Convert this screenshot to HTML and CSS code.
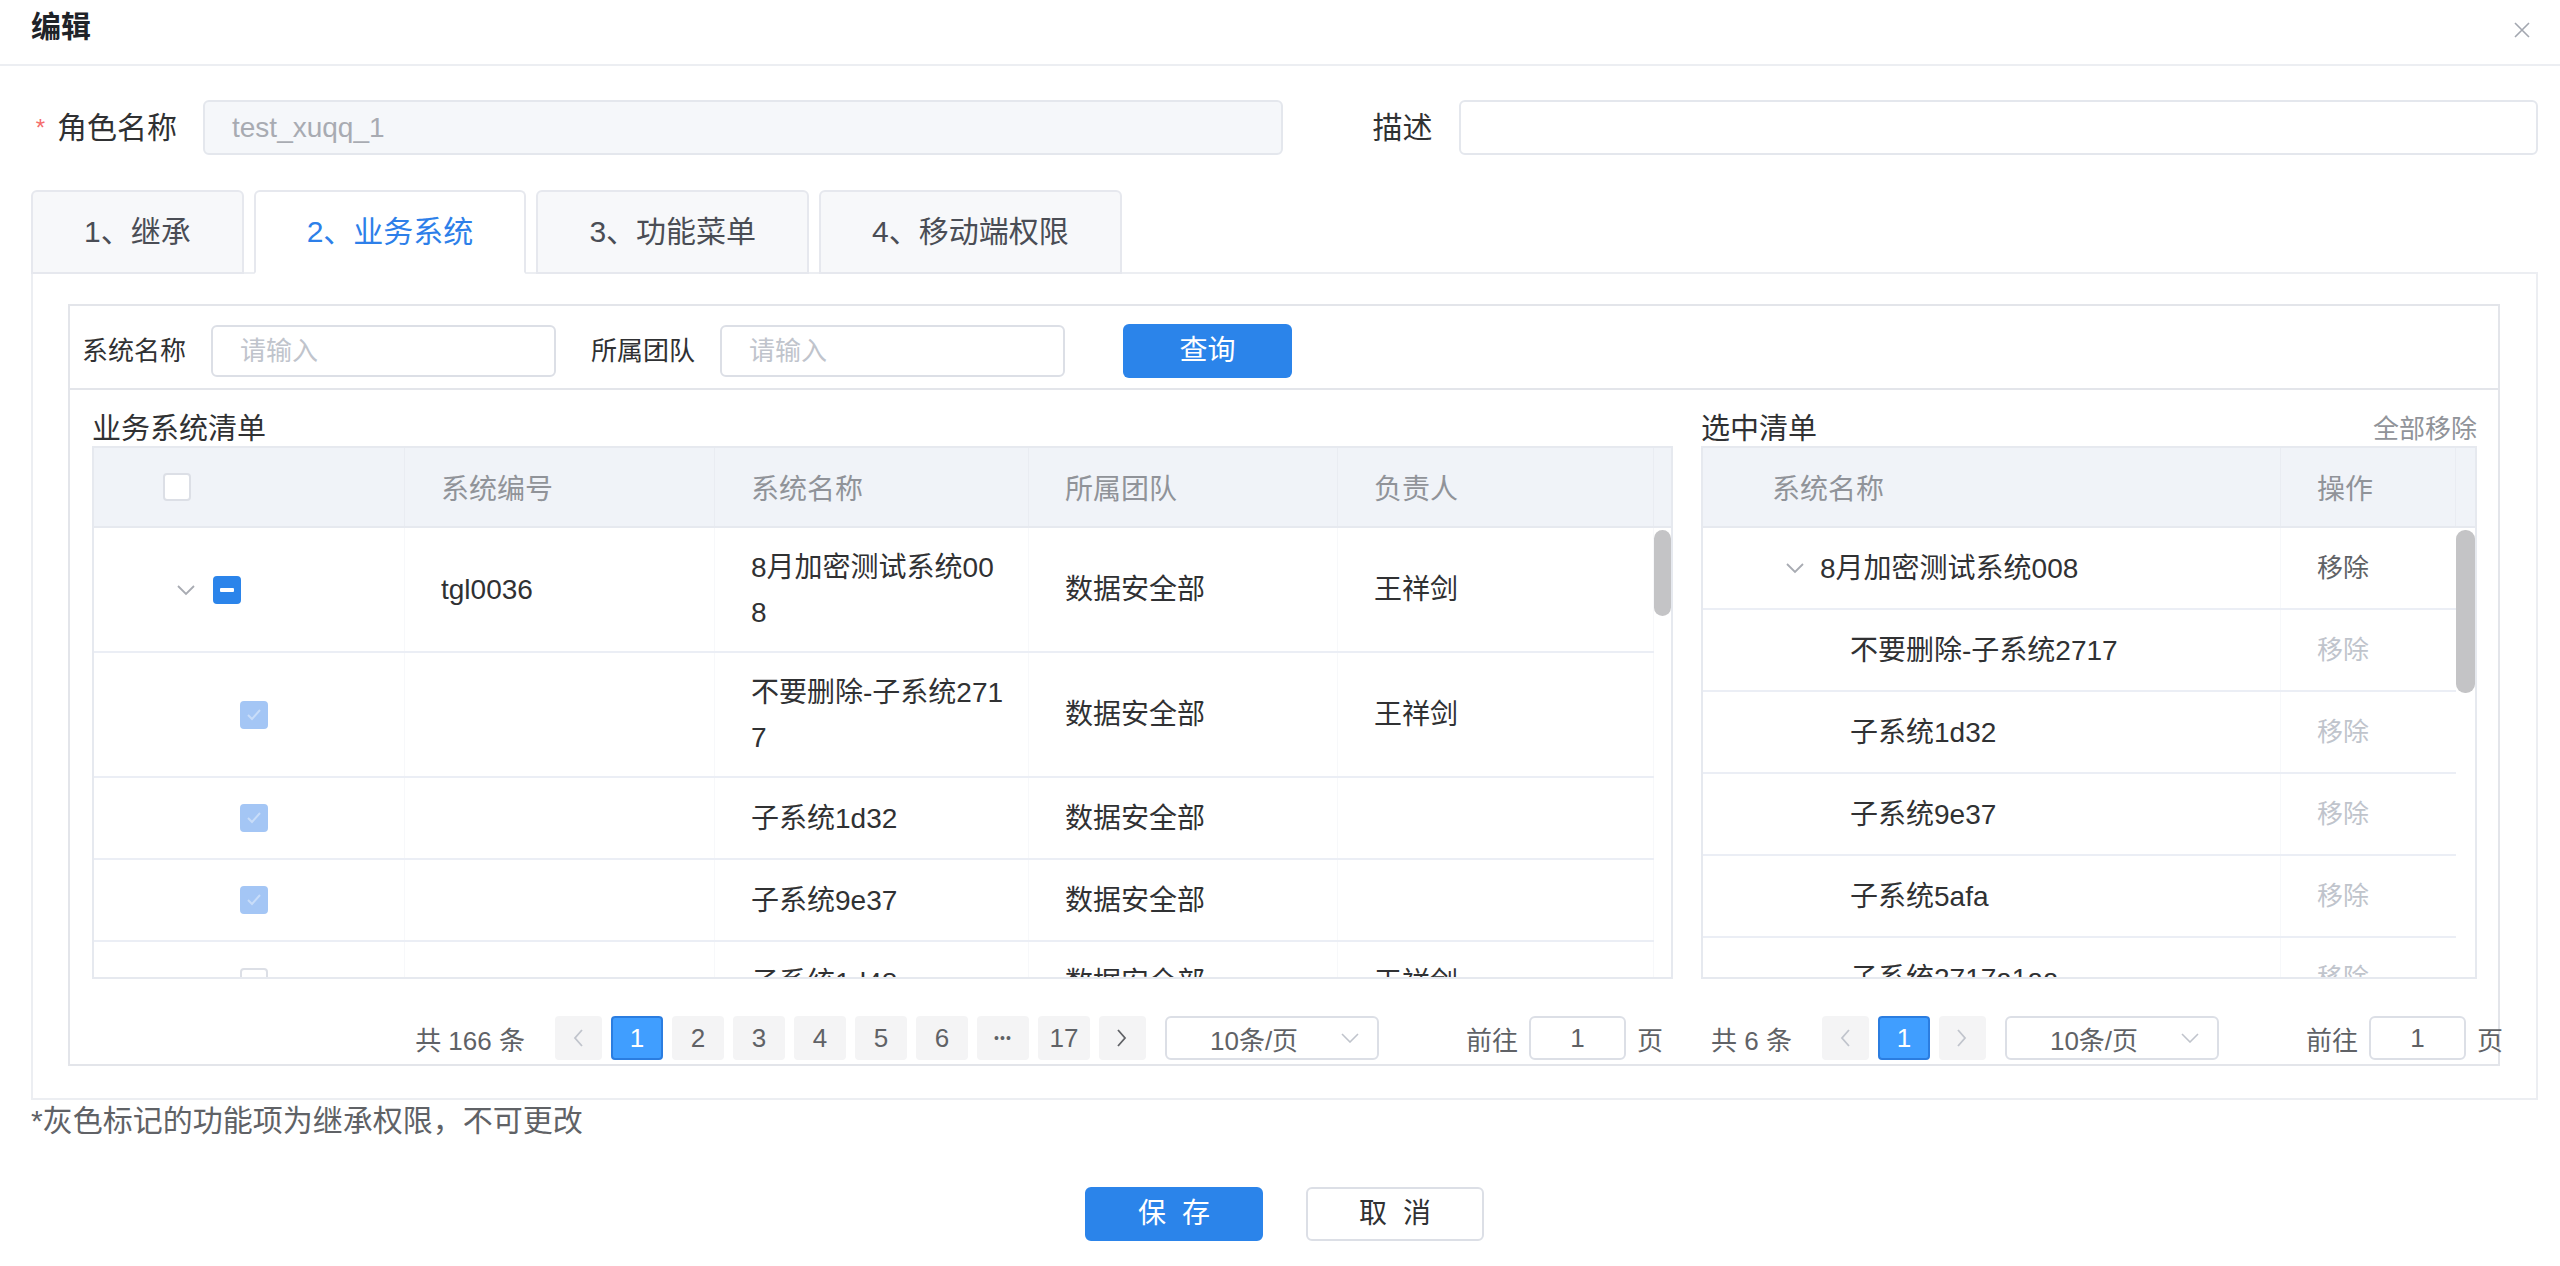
FILE: index.html
```
<!DOCTYPE html>
<html lang="zh-CN">
<head>
<meta charset="utf-8">
<title>编辑</title>
<link rel="stylesheet" href="styles.css">
</head>
<body>
<div class="dialog">
  <div class="dlg-header">
    <span class="dlg-title">编辑</span>
    <svg class="dlg-close" width="16" height="16" viewBox="0 0 16 16"><path d="M1 1L15 15M15 1L1 15" stroke="#a3a7b0" stroke-width="1.6" fill="none"/></svg>
  </div>
  <div class="dlg-body">
    <div class="form-row">
      <div class="field">
        <label class="field-label"><span class="req">*</span>角色名称</label>
        <div class="input input-disabled">test_xuqq_1</div>
      </div>
      <div class="field">
        <label class="field-label">描述</label>
        <div class="input"></div>
      </div>
    </div>

    <div class="tabs">
      <div class="tab-nav">
        <div class="tab">1、继承</div>
        <div class="tab tab-active">2、业务系统</div>
        <div class="tab">3、功能菜单</div>
        <div class="tab">4、移动端权限</div>
      </div>
      <div class="tab-pane">
        <div class="panel">
          <div class="filter">
            <span class="filter-label">系统名称</span>
            <div class="filter-input">请输入</div>
            <span class="filter-label">所属团队</span>
            <div class="filter-input filter-input-last">请输入</div>
            <div class="btn-query">查询</div>
          </div>
          <div class="lists">
            <div class="list list-main">
              <div class="list-head"><span class="list-title">业务系统清单</span></div>
              <div class="tbl">
                <div class="thead thead-main">
                  <div class="th th-check"><span class="cb"></span></div>
                  <div class="th">系统编号</div>
                  <div class="th">系统名称</div>
                  <div class="th">所属团队</div>
                  <div class="th">负责人</div>
                  <div class="th th-gutter"></div>
                </div>
                <div class="tbody">
                  <div class="rows rows-main">
                    <div class="tr tr-main tr-tall">
                      <div class="td td-parent"><svg class="caret" width="20" height="12" viewBox="0 0 20 12"><path d="M2 2l8 8 8-8" fill="none" stroke="#a8abb2" stroke-width="1.8"/></svg><span class="cb cb-ind"></span></div>
                      <div class="td">tgl0036</div>
                      <div class="td">8月加密测试系统00<br>8</div>
                      <div class="td">数据安全部</div>
                      <div class="td">王祥剑</div>
                    </div>
                    <div class="tr tr-main tr-tall">
                      <div class="td td-child"><span class="cb cb-dis"><svg width="24" height="24" viewBox="0 0 24 24"><path d="M6 12l4 4 8-9" fill="none" stroke="#ffffff" stroke-opacity="0.4" stroke-width="2"/></svg></span></div>
                      <div class="td"></div>
                      <div class="td">不要删除-子系统271<br>7</div>
                      <div class="td">数据安全部</div>
                      <div class="td">王祥剑</div>
                    </div>
                    <div class="tr tr-main">
                      <div class="td td-child"><span class="cb cb-dis"><svg width="24" height="24" viewBox="0 0 24 24"><path d="M6 12l4 4 8-9" fill="none" stroke="#ffffff" stroke-opacity="0.4" stroke-width="2"/></svg></span></div>
                      <div class="td"></div>
                      <div class="td">子系统1d32</div>
                      <div class="td">数据安全部</div>
                      <div class="td"></div>
                    </div>
                    <div class="tr tr-main">
                      <div class="td td-child"><span class="cb cb-dis"><svg width="24" height="24" viewBox="0 0 24 24"><path d="M6 12l4 4 8-9" fill="none" stroke="#ffffff" stroke-opacity="0.4" stroke-width="2"/></svg></span></div>
                      <div class="td"></div>
                      <div class="td">子系统9e37</div>
                      <div class="td">数据安全部</div>
                      <div class="td"></div>
                    </div>
                    <div class="tr tr-main">
                      <div class="td td-child"><span class="cb"></span></div>
                      <div class="td"></div>
                      <div class="td">子系统1d48</div>
                      <div class="td">数据安全部</div>
                      <div class="td">王祥剑</div>
                    </div>
                  </div>
                  <div class="gutter"><div class="thumb thumb-main"></div></div>
                </div>
              </div>
              <div class="pager pager-end">
                <span class="pg-total">共 166 条</span>
                <span class="pg-btn pg-arrow pg-disabled"><svg width="12" height="20" viewBox="0 0 12 20"><path d="M10 2L3 10l7 8" fill="none" stroke="currentColor" stroke-width="1.8"/></svg></span>
                <span class="pg-btn pg-active">1</span>
                <span class="pg-btn">2</span>
                <span class="pg-btn">3</span>
                <span class="pg-btn">4</span>
                <span class="pg-btn">5</span>
                <span class="pg-btn">6</span>
                <span class="pg-btn pg-more">•••</span>
                <span class="pg-btn">17</span>
                <span class="pg-btn pg-arrow"><svg width="12" height="20" viewBox="0 0 12 20"><path d="M2 2l7 8-7 8" fill="none" stroke="currentColor" stroke-width="1.8"/></svg></span>
                <span class="pg-select"><span>10条/页</span><svg width="18" height="10" viewBox="0 0 18 10"><path d="M1 1l8 8 8-8" fill="none" stroke="#c0c4cc" stroke-width="1.6"/></svg></span>
                <span class="pg-jump">前往<span class="pg-input">1</span>页</span>
              </div>
            </div>

            <div class="list list-sel">
              <div class="list-head"><span class="list-title">选中清单</span><span class="remove-all">全部移除</span></div>
              <div class="tbl">
                <div class="thead thead-sel">
                  <div class="th th-name">系统名称</div>
                  <div class="th">操作</div>
                  <div class="th th-gutter"></div>
                </div>
                <div class="tbody">
                  <div class="rows rows-sel">
                    <div class="tr tr-sel">
                      <div class="td td-sparent"><svg class="caret caret-sel" width="20" height="12" viewBox="0 0 20 12"><path d="M2 2l8 8 8-8" fill="none" stroke="#a8abb2" stroke-width="1.8"/></svg>8月加密测试系统008</div>
                      <div class="td td-op">移除</div>
                    </div>
                    <div class="tr tr-sel">
                      <div class="td td-schild">不要删除-子系统2717</div>
                      <div class="td td-op td-op-dis">移除</div>
                    </div>
                    <div class="tr tr-sel">
                      <div class="td td-schild">子系统1d32</div>
                      <div class="td td-op td-op-dis">移除</div>
                    </div>
                    <div class="tr tr-sel">
                      <div class="td td-schild">子系统9e37</div>
                      <div class="td td-op td-op-dis">移除</div>
                    </div>
                    <div class="tr tr-sel">
                      <div class="td td-schild">子系统5afa</div>
                      <div class="td td-op td-op-dis">移除</div>
                    </div>
                    <div class="tr tr-sel">
                      <div class="td td-schild">子系统2717a1aa</div>
                      <div class="td td-op td-op-dis">移除</div>
                    </div>
                  </div>
                  <div class="gutter"><div class="thumb thumb-sel"></div></div>
                </div>
              </div>
              <div class="pager pager-start">
                <span class="pg-total pg-total-sel">共 6 条</span>
                <span class="pg-btn pg-arrow pg-disabled"><svg width="12" height="20" viewBox="0 0 12 20"><path d="M10 2L3 10l7 8" fill="none" stroke="currentColor" stroke-width="1.8"/></svg></span>
                <span class="pg-btn pg-active">1</span>
                <span class="pg-btn pg-arrow pg-disabled"><svg width="12" height="20" viewBox="0 0 12 20"><path d="M2 2l7 8-7 8" fill="none" stroke="currentColor" stroke-width="1.8"/></svg></span>
                <span class="pg-select"><span>10条/页</span><svg width="18" height="10" viewBox="0 0 18 10"><path d="M1 1l8 8 8-8" fill="none" stroke="#c0c4cc" stroke-width="1.6"/></svg></span>
                <span class="pg-jump">前往<span class="pg-input">1</span>页</span>
              </div>
            </div>
          </div>
        </div>
      </div>
    </div>

    <div class="note">*灰色标记的功能项为继承权限，不可更改</div>

    <div class="dlg-footer">
      <div class="btn btn-primary">保存</div>
      <div class="btn btn-default">取消</div>
    </div>
  </div>
</div>
</body>
</html>
```

FILE: styles.css
```
* {
  box-sizing: border-box;
  margin: 0;
  padding: 0;
}

body {
  margin: 0;
  width: 2560px;
  background: #ffffff;
  font-family: "Liberation Sans", "Noto Sans CJK SC", sans-serif;
  color: #303133;
}

.dialog {
  width: 2560px;
}

/* header */
.dlg-header {
  height: 66px;
  border-bottom: 2px solid #eceef2;
  padding: 7px 30px 0 31px;
  display: flex;
  justify-content: space-between;
  align-items: flex-start;
}

.dlg-title {
  font-size: 30px;
  line-height: 40px;
  font-weight: 600;
  color: #1f2329;
}

.dlg-close {
  margin-top: 15px;
}

.dlg-body {
  padding: 34px 22px 0 31px;
}

/* form row */
.form-row {
  display: grid;
  grid-template-columns: 1fr 1fr;
  column-gap: 4px;
}

.field {
  display: flex;
  align-items: center;
}

.field-label {
  width: 172px;
  flex: none;
  padding-right: 26px;
  display: flex;
  justify-content: flex-end;
  align-items: center;
  font-size: 30px;
  line-height: 55px;
  color: #303133;
}

.req {
  color: #f56c6c;
  font-size: 24px;
  margin-right: 12px;
}

.input {
  flex: 1;
  height: 55px;
  border: 2px solid #e4e7ed;
  border-radius: 6px;
  background: #ffffff;
  padding-left: 27px;
  font-size: 28px;
  line-height: 51px;
  color: #303133;
}

.input-disabled {
  background: #f5f7fa;
  color: #a8abb2;
}

/* tabs */
.tabs {
  margin-top: 35px;
}

.tab-nav {
  display: flex;
  gap: 10px;
  margin-bottom: -2px;
  position: relative;
  z-index: 1;
}

.tab {
  height: 84px;
  padding: 0 51px;
  border: 2px solid #e6e8ee;
  border-radius: 6px 6px 0 0;
  background: #f7f8fa;
  font-size: 30px;
  line-height: 80px;
  color: #4a4d55;
}

.tab-active {
  background: #ffffff;
  border-bottom-color: #ffffff;
  color: #2d7fe9;
}

.tab-pane {
  border: 2px solid #eceef2;
  padding: 30px 36px 32px 35px;
}

.panel {
  border: 2px solid #e3e5ea;
}

/* filter */
.filter {
  display: flex;
  align-items: center;
  padding: 18px 12px 10px;
  border-bottom: 2px solid #e3e5ea;
}

.filter-label {
  font-size: 26px;
  line-height: 54px;
  color: #303133;
  margin-right: 25px;
}

.filter-input {
  width: 345px;
  height: 52px;
  border: 2px solid #dcdfe6;
  border-radius: 6px;
  padding-left: 27px;
  font-size: 26px;
  line-height: 48px;
  color: #c0c4cc;
  margin-right: 35px;
}

.filter-input-last {
  margin-right: 58px;
}

.btn-query {
  width: 169px;
  height: 54px;
  background: #2b84ea;
  color: #ffffff;
  border-radius: 6px;
  font-size: 28px;
  line-height: 54px;
  text-align: center;
}

/* lists */
.lists {
  display: flex;
  gap: 28px;
  padding: 0 21px 4px 22px;
}

.list-main {
  width: 1581px;
  flex: none;
}

.list-sel {
  flex: 1;
  min-width: 0;
}

.list-head {
  height: 56px;
  padding-top: 21px;
  display: flex;
  justify-content: space-between;
  align-items: flex-start;
}

.list-title {
  font-size: 29px;
  line-height: 36px;
  color: #303133;
}

.remove-all {
  font-size: 26px;
  line-height: 36px;
  color: #909399;
}

/* tables */
.tbl {
  border: 2px solid #e6e9ef;
}

.thead {
  display: grid;
  height: 80px;
  background: #f0f3f8;
  border-bottom: 2px solid #e6e9ef;
}

.thead-main {
  grid-template-columns: 311px 310px 314px 309px 316px 1fr;
}

.thead-sel {
  grid-template-columns: 578px 175px 1fr;
}

.th {
  display: flex;
  align-items: center;
  padding-left: 36px;
  font-size: 28px;
  color: #909399;
  border-right: 1px solid #e9ecf2;
}

.th-check {
  padding-left: 69px;
}

.th-name {
  padding-left: 69px;
}

.th-gutter {
  border-right: none;
}

.tbody {
  display: flex;
  height: 449px;
  overflow: hidden;
}

.rows {
  flex: none;
}

.rows-main {
  width: 1560px;
}

.rows-sel {
  width: 753px;
}

.tr {
  display: grid;
  height: 82px;
  border-bottom: 2px solid #ebeef5;
}

.tr-main {
  grid-template-columns: 311px 310px 314px 309px 316px;
}

.tr-sel {
  grid-template-columns: 578px 175px;
}

.tr-tall {
  height: 125px;
}

.td {
  display: flex;
  align-items: center;
  padding-left: 36px;
  font-size: 28px;
  line-height: 45px;
  color: #303133;
  border-right: 1px solid #f7f8fa;
  white-space: nowrap;
}

.td-parent {
  padding-left: 82px;
}

.td-child {
  padding-left: 146px;
}

.td-sparent {
  padding-left: 82px;
}

.td-schild {
  padding-left: 147px;
}

.caret {
  flex: none;
  margin-right: 17px;
}

.caret-sel {
  margin-right: 15px;
}

.td-op {
  font-size: 26px;
  color: #606266;
  border-right: none;
}

.td-op-dis {
  color: #c0c4cc;
}

.gutter {
  flex: 1;
}

.thumb {
  margin-top: 2px;
  background: #c4c4c6;
  border-radius: 9px;
}

.thumb-main {
  height: 86px;
}

.thumb-sel {
  height: 163px;
}

/* checkboxes */
.cb {
  width: 28px;
  height: 28px;
  flex: none;
  border: 2px solid #dcdfe6;
  border-radius: 4px;
  background: #ffffff;
  display: flex;
  align-items: center;
  justify-content: center;
}

.cb-ind {
  background: #2b84ea;
  border-color: #2b84ea;
}

.cb-ind::before {
  content: "";
  width: 14px;
  height: 4px;
  border-radius: 1px;
  background: #ffffff;
}

.cb-dis {
  background: #a4c6f5;
  border-color: #a4c6f5;
}

/* pagination */
.pager {
  display: flex;
  align-items: center;
  height: 44px;
  margin-top: 37px;
  font-size: 26px;
  color: #606266;
  white-space: nowrap;
}

.pager-end {
  justify-content: flex-end;
  padding-right: 10px;
}

.pager-start {
  padding-left: 10px;
}

.pg-total {
  margin-right: 30px;
}

.pg-btn {
  width: 52px;
  height: 44px;
  flex: none;
  margin-right: 9px;
  background: #f4f4f5;
  border-radius: 4px;
  display: flex;
  align-items: center;
  justify-content: center;
  color: #606266;
}

.pg-arrow {
  width: 47px;
}

.pg-disabled {
  color: #c0c4cc;
}

.pg-more {
  font-size: 14px;
  letter-spacing: 1px;
}

.pg-active {
  background: #409eff;
  border: 2px solid #2b7de0;
  color: #ffffff;
}

.pg-select {
  margin-left: 10px;
  width: 214px;
  height: 44px;
  flex: none;
  border: 2px solid #dcdfe6;
  border-radius: 6px;
  display: flex;
  align-items: center;
  justify-content: space-between;
  padding: 0 18px 0 43px;
}

.pg-jump {
  margin-left: 87px;
  display: flex;
  align-items: center;
  gap: 11px;
}

.pg-input {
  width: 97px;
  height: 44px;
  border: 2px solid #dcdfe6;
  border-radius: 6px;
  text-align: center;
  line-height: 40px;
}

/* note & footer */
.note {
  font-size: 30px;
  line-height: 42px;
  color: #606266;
}

.dlg-footer {
  display: flex;
  justify-content: center;
  gap: 43px;
  margin-top: 45px;
}

.btn {
  width: 178px;
  height: 54px;
  border-radius: 6px;
  font-size: 28px;
  line-height: 50px;
  text-align: center;
  letter-spacing: 16px;
  padding-left: 16px;
  border: 2px solid transparent;
}

.btn-primary {
  background: #2b84ea;
  border-color: #2b84ea;
  color: #ffffff;
}

.btn-default {
  background: #ffffff;
  border-color: #dcdfe6;
  color: #303133;
}
```
